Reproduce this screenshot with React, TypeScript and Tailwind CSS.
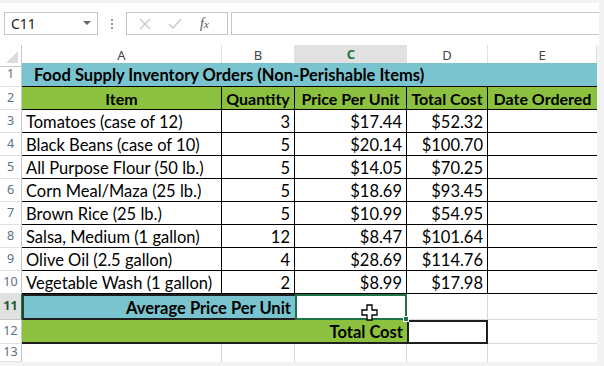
import React from "react";

const cols = "grid grid-cols-[22px_200px_73px_112px_81px_109px_7px]";
const cellFont = { fontFamily: "Lato, 'Open Sans', sans-serif" };

const items = [
  ["Tomatoes (case of 12)", "3", "$17.44", "$52.32"],
  ["Black Beans (case of 10)", "5", "$20.14", "$100.70"],
  ["All Purpose Flour (50 lb.)", "5", "$14.05", "$70.25"],
  ["Corn Meal/Maza (25 lb.)", "5", "$18.69", "$93.45"],
  ["Brown Rice (25 lb.)", "5", "$10.99", "$54.95"],
  ["Salsa, Medium (1 gallon)", "12", "$8.47", "$101.64"],
  ["Olive Oil (2.5 gallon)", "4", "$28.69", "$114.76"],
  ["Vegetable Wash (1 gallon)", "2", "$8.99", "$17.98"],
];

function RowHead({ n, active }: { n: number; active?: boolean }) {
  return (
    <div
      className={`flex items-center justify-center border-r border-b text-[12.5px] ${
        active
          ? "bg-[#e1e1e1] border-r-[#217346] border-b-[#c6c6c6] text-[#1d5c37] font-bold"
          : "bg-white border-r-[#c6c6c6] border-b-[#e1e1e1] text-[#5a6f8a]"
      }`}
      style={{ fontFamily: "'Noto Sans', sans-serif" }}
    >
      {n}
    </div>
  );
}

function Scroll() {
  return <div className="bg-[#f3f3f3]" />;
}

export default function App() {
  return (
    <div className="w-[604px] h-[366px] overflow-hidden bg-white relative select-none">
      {/* formula bar */}
      <div className="h-[3px] bg-[#f3f3f3]" />
      <div className="h-[42px] flex items-start pt-[9px] pl-[4px]" style={{ fontFamily: "'Noto Sans', sans-serif" }}>
        <div className="w-[94px] h-[23px] border border-[#c6c6c6] flex items-center justify-between pl-[6px] pr-[6px] text-[14px] text-[#222]">
          <span>C11</span>
          <svg width="8" height="5" viewBox="0 0 8 5">
            <path d="M0 0 L8 0 L4 4 Z" fill="#666" />
          </svg>
        </div>
        <div className="w-[28px] h-[23px] flex flex-col items-center justify-center gap-[2px]">
          <span className="w-[2px] h-[2px] bg-[#999]" />
          <span className="w-[2px] h-[2px] bg-[#999]" />
          <span className="w-[2px] h-[2px] bg-[#999]" />
        </div>
        <div className="w-[102px] h-[23px] border border-[#c6c6c6] flex items-center pl-[12px]">
          <svg width="12" height="12" viewBox="0 0 12 12" className="mr-[17px]">
            <path d="M1 1 L11 11 M11 1 L1 11" stroke="#c8c8c8" strokeWidth="1.3" />
          </svg>
          <svg width="14" height="12" viewBox="0 0 14 12" className="mr-[18px]">
            <path d="M1 6 L5 10 L13 1" stroke="#c8c8c8" strokeWidth="1.4" fill="none" />
          </svg>
          <span className="text-[14px] italic text-[#555]" style={{ fontFamily: "'Liberation Serif', serif" }}>
            f<span className="text-[11px]">x</span>
          </span>
        </div>
        <div className="ml-[3px] w-[368px] h-[23px] border border-[#c6c6c6] border-r-0" />
        <div className="flex-1 h-[42px] -mt-[9px] bg-[#f3f3f3]" />
      </div>

      {/* column header */}
      <div className={`${cols} h-[18px] text-[13px] text-[#444]`} style={{ fontFamily: "'Noto Sans', sans-serif" }}>
        <div className="border-r border-b border-[#c6c6c6] relative bg-white">
          <svg width="12" height="12" viewBox="0 0 12 12" className="absolute right-[3px] bottom-[3px]">
            <path d="M12 0 L12 12 L0 12 Z" fill="#dcdcdc" />
          </svg>
        </div>
        <div className="flex items-center justify-center border-r border-b border-r-[#e1e1e1] border-b-[#c6c6c6]">A</div>
        <div className="flex items-center justify-center border-r border-b border-r-[#e1e1e1] border-b-[#c6c6c6]">B</div>
        <div className="flex items-center justify-center bg-[#e1e1e1] border-b-2 border-[#217346] text-[#217346] font-bold">C</div>
        <div className="flex items-center justify-center border-r border-b border-r-[#e1e1e1] border-b-[#c6c6c6]">D</div>
        <div className="flex items-center justify-center border-r border-b border-r-[#e1e1e1] border-b-[#c6c6c6]">E</div>
        <Scroll />
      </div>

      <div style={cellFont} className="text-[16.5px] text-black leading-none">
        {/* row 1 */}
        <div className={`${cols} h-[24px]`}>
          <RowHead n={1} />
          <div className="col-span-5 bg-[#79c4cf] border-b border-black flex items-center pt-[2px] pl-[12px] font-bold">
            Food Supply Inventory Orders (Non-Perishable Items)
          </div>
          <Scroll />
        </div>

        {/* row 2 */}
        <div className={`${cols} h-[23px]`}>
          <RowHead n={2} />
          {["Item", "Quantity", "Price Per Unit", "Total Cost", "Date Ordered"].map((h, i) => (
            <div
              key={h}
              className={`bg-[#8cc13f] border-b border-black flex items-center justify-center pt-[2px] text-[16px] font-bold ${
                i < 4 ? "border-r" : ""
              }`}
            >
              {h}
            </div>
          ))}
          <Scroll />
        </div>

        {/* data rows */}
        {items.map((r, idx) => (
          <div key={r[0]} className={`${cols} h-[23px]`}>
            <RowHead n={idx + 3} />
            <div className="border-r border-b border-black flex items-center pt-[2px] pl-[4px]">{r[0]}</div>
            <div className="border-r border-b border-black flex items-center justify-end pt-[2px] pr-[4px]">{r[1]}</div>
            <div className="border-r border-b border-black flex items-center justify-end pt-[2px] pr-[4px]">{r[2]}</div>
            <div className="border-r border-b border-black flex items-center justify-end pt-[2px] pr-[4px]">{r[3]}</div>
            <div className="border-b border-black" />
            <Scroll />
          </div>
        ))}

        {/* row 11 */}
        <div className={`${cols} h-[26px]`}>
          <RowHead n={11} active />
          <div className="col-span-2 bg-[#79c4cf] border-2 border-t-[#1f1f1f] border-b-[#1f1f1f] border-l-[#1f4a30] border-r-0 flex items-center justify-end pt-[2px] pr-[4px] font-bold">
            Average Price Per Unit
          </div>
          <div className="relative border-2 border-[#217346]">
            <div className="absolute -right-[4px] -bottom-[4px] w-[6px] h-[6px] bg-[#217346] border border-white" />
            <svg width="20" height="20" viewBox="0 0 20 20" className="absolute left-[63px] top-[7px]">
              <path
                d="M7 2 H12 V7 H17 V12 H12 V17 H7 V12 H2 V7 H7 Z"
                fill="white"
                stroke="black"
                strokeWidth="1.3"
              />
            </svg>
          </div>
          <div className="border-r border-b border-[#d9d9d9]" />
          <div className="border-b border-[#d9d9d9]" />
          <Scroll />
        </div>

        {/* row 12 */}
        <div className={`${cols} h-[24px]`}>
          <RowHead n={12} />
          <div className="col-span-3 bg-[#8cc13f] border-b-2 border-[#1f1f1f] flex items-center justify-end pt-[2px] pr-[4px] font-bold">
            Total Cost
          </div>
          <div className="border-2 border-[#1f1f1f]" />
          <div className="border-b border-[#d9d9d9]" />
          <Scroll />
        </div>

        {/* row 13 */}
        <div className={`${cols} h-[18px]`}>
          <RowHead n={13} />
          <div className="border-r border-[#d9d9d9]" />
          <div className="border-r border-[#d9d9d9]" />
          <div className="border-r border-[#d9d9d9]" />
          <div className="border-r border-[#d9d9d9]" />
          <div />
          <Scroll />
        </div>
        <div className="h-[4px] bg-[#f3f3f3]" />
      </div>
    </div>
  );
}
